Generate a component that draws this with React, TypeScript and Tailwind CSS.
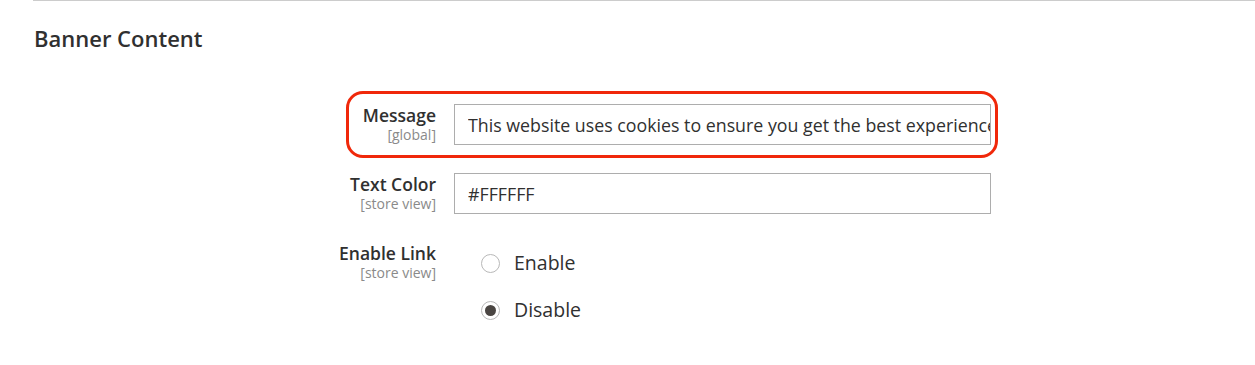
const font = { fontFamily: '"Open Sans", "Noto Sans", sans-serif' };

type FieldRowProps = { label: string; scope: string; children: React.ReactNode; highlight?: boolean };

function FieldRow({ label, scope, children, highlight }: FieldRowProps) {
  return (
    <div className="relative flex">
      <div className="w-[403px] pt-[1px] text-right">
        <div className="text-[17.5px] font-semibold leading-[21px] text-[#303030]">{label}</div>
        <div className="text-[14px] leading-[17px] text-[#8a8a8a]">{scope}</div>
      </div>
      <div className="ml-[18px] w-[537px]">{children}</div>
      {highlight ? (
        <div className="pointer-events-none absolute -top-[13px] -bottom-[13px] left-[313px] w-[652px] rounded-[17px] border-[3px] border-[#f0280a]" />
      ) : null}
    </div>
  );
}

function TextInput({ value }: { value: string }) {
  return (
    <input
      readOnly
      value={value}
      className="block h-[41px] w-full border border-[#adadad] bg-white pl-[13px] pr-0 text-[17.8px] text-[#303030] outline-none"
      style={font}
    />
  );
}

function Radio({ label, checked }: { label: string; checked?: boolean }) {
  return (
    <div className="flex h-[28px] items-center">
      <span className="ml-[27px] flex h-[19px] w-[19px] items-center justify-center rounded-full border border-[#b8b8b8] bg-white">
        {checked ? <span className="h-[11px] w-[11px] rounded-full bg-[#4a4542]" /> : null}
      </span>
      <span className="ml-[14px] text-[19.5px] text-[#303030]">{label}</span>
    </div>
  );
}

export default function App() {
  return (
    <div className="h-[365px] w-[1255px] overflow-hidden bg-white" style={font}>
      <div className="ml-[33px] border-t border-[#cccccc]">
        <h2 className="mt-[23px] ml-[1px] text-[22px] font-semibold leading-[28px] text-[#303030]">
          Banner Content
        </h2>
        <div className="mt-[52px] flex flex-col gap-[28px]">
          <FieldRow label="Message" scope="[global]" highlight>
            <TextInput value="This website uses cookies to ensure you get the best experience on our website." />
          </FieldRow>
          <FieldRow label="Text Color" scope="[store view]">
            <TextInput value="#FFFFFF" />
          </FieldRow>
          <FieldRow label="Enable Link" scope="[store view]">
            <div className="flex flex-col gap-[19px] pt-[7px]">
              <Radio label="Enable" />
              <Radio label="Disable" checked />
            </div>
          </FieldRow>
        </div>
      </div>
    </div>
  );
}
